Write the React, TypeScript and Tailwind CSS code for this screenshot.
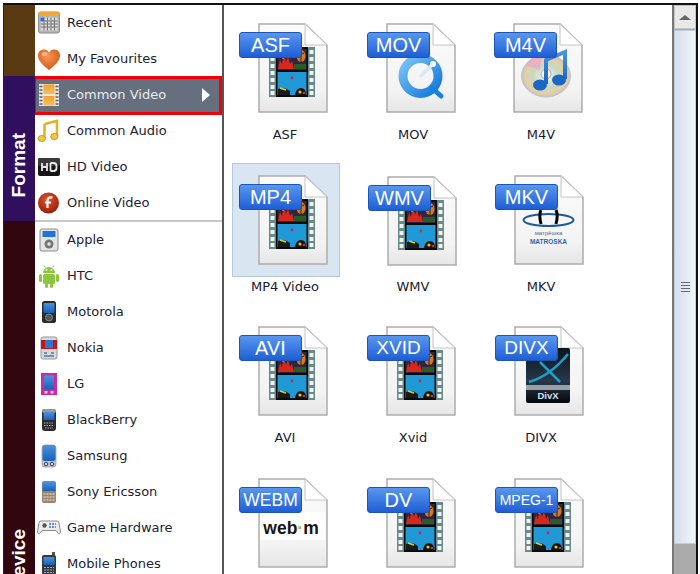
import React from "react";

const Defs = () => (
  <svg width="0" height="0" className="absolute">
    <defs>
      <linearGradient id="sheet" x1="0" y1="0" x2="0" y2="1">
        <stop offset="0" stopColor="#fbfbfb" />
        <stop offset="0.75" stopColor="#f3f3f3" />
        <stop offset="1" stopColor="#e6e6e6" />
      </linearGradient>
      <linearGradient id="chip" x1="0" y1="0" x2="0" y2="1">
        <stop offset="0" stopColor="#f0a030" />
        <stop offset="1" stopColor="#f4c060" />
      </linearGradient>
      <radialGradient id="heart" cx="0.45" cy="0.35" r="0.7">
        <stop offset="0" stopColor="#f49a58" />
        <stop offset="1" stopColor="#d2520f" />
      </radialGradient>
      <radialGradient id="flash" cx="0.45" cy="0.35" r="0.7">
        <stop offset="0" stopColor="#e8532c" />
        <stop offset="1" stopColor="#8f1c08" />
      </radialGradient>
      <linearGradient id="blue" x1="0" y1="0" x2="0" y2="1">
        <stop offset="0" stopColor="#4a93e0" />
        <stop offset="1" stopColor="#1960b8" />
      </linearGradient>
      <linearGradient id="qt" x1="0" y1="0" x2="1" y2="1">
        <stop offset="0" stopColor="#7cc4f6" />
        <stop offset="1" stopColor="#1276dc" />
      </linearGradient>
      <radialGradient id="cd" cx="0.5" cy="0.5" r="0.55">
        <stop offset="0" stopColor="#f0f0f0" />
        <stop offset="0.5" stopColor="#c8d8c0" />
        <stop offset="0.75" stopColor="#e6cfa8" />
        <stop offset="1" stopColor="#b6bcc6" />
      </radialGradient>
      <linearGradient id="dvx" x1="0" y1="0" x2="0" y2="1">
        <stop offset="0" stopColor="#0c141c" />
        <stop offset="0.6" stopColor="#28384a" />
        <stop offset="1" stopColor="#06080a" />
      </linearGradient>
    </defs>
  </svg>
);

/* ---------- sidebar icons (24x24) ---------- */
const Phone = ({ body, screen = "url(#blue)", children }: { body: string; screen?: string; children?: React.ReactNode }) => (
  <svg viewBox="0 0 24 24" className="w-6 h-6">
    <rect x="5" y="1" width="14" height="22" rx="2.5" fill={body} />
    <rect x="6.5" y="3" width="11" height="10" rx="1" fill={screen} />
    {children}
  </svg>
);

const icons: Record<string, React.ReactNode> = {
  recent: (
    <svg viewBox="0 0 24 24" className="w-6 h-6">
      <rect x="1.5" y="1" width="21" height="21" rx="2" fill="#b4b4b4" stroke="#8c8c8c" />
      <rect x="1.5" y="1" width="21" height="4" rx="1" fill="#f0a838" />
      <rect x="3.5" y="6.5" width="17" height="13" fill="#d8d8d8" />
      <path d="M3.5 10h17M3.5 13h17M3.5 16h17M7 6.5v13M10.5 6.5v13M14 6.5v13M17.5 6.5v13" stroke="#777" strokeWidth="1" />
      <rect x="3.5" y="6.5" width="3.5" height="3.5" fill="#1e6fe0" />
    </svg>
  ),
  fav: (
    <svg viewBox="0 0 24 24" className="w-6 h-6">
      <path d="M12 23C6 18 1 14 1 8.5 1 4.500 4 2.500 7 2.500c2.500 0 4 1.200 5 3 1-1.800 2.500-3 5-3 3 0 6 2 6 6C23 14 18 18 12 23z" fill="url(#heart)" />
      <ellipse cx="7.5" cy="7" rx="3" ry="2" fill="#fbc79c" opacity="0.7" />
    </svg>
  ),
  video: (
    <svg viewBox="0 0 24 24" className="w-6 h-6">
      <rect x="2" y="1" width="20" height="22" fill="#e8e8e0" />
      <rect x="6.5" y="1.5" width="11" height="9.5" fill="url(#chip)" />
      <rect x="6.5" y="13" width="11" height="9.5" fill="url(#chip)" />
      <path d="M2.500 3.500h3M2.500 7h3M2.500 10.500h3M2.500 14h3M2.500 17.500h3M2.500 21h3M18.500 3.500h3M18.500 7h3M18.500 10.500h3M18.500 14h3M18.500 17.500h3M18.500 21h3" stroke="#55606c" strokeWidth="1.5" />
    </svg>
  ),
  audio: (
    <svg viewBox="0 0 24 24" className="w-6 h-6">
      <path d="M7.5 5 20 2v15" fill="none" stroke="#e2b42c" strokeWidth="2.6" />
      <path d="M7.5 5v14.500" fill="none" stroke="#e2b42c" strokeWidth="2.6" />
      <ellipse cx="4.8" cy="19.5" rx="3.6" ry="3" fill="#f2c93e" stroke="#c4961c" />
      <ellipse cx="17.3" cy="17.5" rx="3.6" ry="3" fill="#f2c93e" stroke="#c4961c" />
    </svg>
  ),
  hd: (
    <svg viewBox="0 0 24 24" className="w-6 h-6">
      <rect x="1" y="3" width="22" height="18" rx="2" fill="#151515" />
      <rect x="1" y="3" width="22" height="8" rx="2" fill="#3a3a3a" />
      <path d="M5 8v8M10 8v8M5 12h5M13.500 8v8M13.500 8h3a3 3 0 0 1 3 3v2a3 3 0 0 1-3 3h-3" fill="none" stroke="#e8e8e8" strokeWidth="1.8" />
    </svg>
  ),
  online: (
    <svg viewBox="0 0 24 24" className="w-6 h-6">
      <circle cx="11.5" cy="12" r="10.5" fill="url(#flash)" />
      <path d="M15.500 6.500c-3.500-.6-5 .6-5 3.500v7M8 11.500h6" fill="none" stroke="#fff" strokeWidth="2.2" />
    </svg>
  ),
  apple: (
    <svg viewBox="0 0 24 24" className="w-6 h-6">
      <rect x="3" y="1" width="18" height="22" rx="2" fill="#e4e4e4" stroke="#8a8a8a" />
      <rect x="5.5" y="3" width="13" height="6" fill="#1e74d8" />
      <circle cx="12" cy="16" r="4.5" fill="#777" />
      <circle cx="12" cy="16" r="1.8" fill="#e4e4e4" />
    </svg>
  ),
  htc: (
    <svg viewBox="0 0 24 24" className="w-6 h-6">
      <path d="M6 9a6 6 0 0 1 12 0z" fill="#8cc63f" />
      <rect x="6" y="10" width="12" height="10" rx="1.5" fill="#8cc63f" />
      <rect x="2" y="10" width="3" height="8" rx="1.5" fill="#8cc63f" />
      <rect x="19" y="10" width="3" height="8" rx="1.5" fill="#8cc63f" />
      <rect x="8" y="19" width="3" height="5" rx="1.5" fill="#8cc63f" />
      <rect x="13" y="19" width="3" height="5" rx="1.5" fill="#8cc63f" />
      <path d="M8.500 3.500 7 1.500M15.500 3.500 17 1.500" stroke="#8cc63f" />
      <circle cx="9.5" cy="6" r="1" fill="#fff" />
      <circle cx="14.5" cy="6" r="1" fill="#fff" />
    </svg>
  ),
  motorola: (
    <Phone body="#2a2a2a">
      <circle cx="12" cy="17.5" r="3.5" fill="#555" stroke="#888" />
    </Phone>
  ),
  nokia: (
    <svg viewBox="0 0 24 24" className="w-6 h-6">
      <rect x="4" y="1" width="16" height="22" rx="2" fill="#d8d8d8" stroke="#999" />
      <rect x="4" y="4" width="16" height="9" fill="#c01818" />
      <rect x="8" y="4" width="8" height="8" fill="#2a78d0" />
      <path d="M7 17h3M14 17h3M7 20h10" stroke="#4a7ab0" strokeWidth="1.6" />
    </svg>
  ),
  lg: (
    <svg viewBox="0 0 24 24" className="w-6 h-6">
      <rect x="4" y="1" width="16" height="22" fill="#c82c9e" />
      <rect x="7" y="3.5" width="10" height="14" rx="1" fill="url(#blue)" />
      <rect x="7.5" y="19" width="3" height="2.5" fill="#f6d0ea" />
      <rect x="13.5" y="19" width="3" height="2.5" fill="#f6d0ea" />
    </svg>
  ),
  blackberry: (
    <svg viewBox="0 0 24 24" className="w-6 h-6">
      <rect x="5" y="1" width="14" height="22" rx="3" fill="#2c2c2c" />
      <rect x="5" y="1" width="14" height="4" rx="2" fill="#999" />
      <rect x="6.5" y="4" width="11" height="8" fill="url(#blue)" />
      <path d="M7 15h10M7 17.500h10M8 20h8" stroke="#aaa" strokeWidth="1.2" strokeDasharray="1.5 1" />
    </svg>
  ),
  samsung: (
    <svg viewBox="0 0 24 24" className="w-6 h-6">
      <rect x="5" y="1" width="14" height="22" rx="3" fill="#c0c8d4" stroke="#667" strokeWidth="0.5" />
      <rect x="5.5" y="1" width="13" height="16" rx="2.5" fill="url(#blue)" />
      <circle cx="9" cy="20" r="1.8" fill="none" stroke="#445" />
      <circle cx="15" cy="20" r="1.8" fill="none" stroke="#445" />
    </svg>
  ),
  sony: (
    <svg viewBox="0 0 24 24" className="w-6 h-6">
      <rect x="5" y="1" width="14" height="22" rx="2" fill="#9c8470" />
      <rect x="5.5" y="2" width="13" height="9" fill="url(#blue)" />
      <path d="M6.500 14h11M6.500 17h11M6.500 20h11" stroke="#d8c8b8" strokeWidth="1.4" strokeDasharray="2 1" />
    </svg>
  ),
  game: (
    <svg viewBox="0 0 24 24" className="w-6 h-6">
      <path d="M2 7c0-1.500 1-2 2-2h16c1 0 2 .5 2 2l1.500 9c.2 1.800-2 2-3 .5l-1.500-2H5l-1.500 2c-1 1.500-3.200 1.300-3-.5z" fill="#ececec" stroke="#8a8a8a" />
      <circle cx="7.5" cy="9.5" r="2.2" fill="#555" />
      <path d="M12 8h7M12 11h7" stroke="#3a74c0" strokeWidth="1.5" strokeDasharray="2 1" />
    </svg>
  ),
  mobile: (
    <svg viewBox="0 0 24 24" className="w-6 h-6">
      <rect x="15" y="0" width="3" height="4" fill="#555" />
      <rect x="5" y="3" width="14" height="20" rx="2" fill="#33383e" />
      <rect x="6.5" y="5" width="11" height="8" fill="url(#blue)" />
      <path d="M7 15.500h10M7 18h10M7 20.500h10" stroke="#aab" strokeWidth="1.2" strokeDasharray="2 1" />
    </svg>
  ),
};

const topRows = [
  { k: "recent", t: "Recent" },
  { k: "fav", t: "My Favourites" },
  { k: "video", t: "Common Video", sel: true },
  { k: "audio", t: "Common Audio" },
  { k: "hd", t: "HD Video" },
  { k: "online", t: "Online Video" },
];
const deviceRows = [
  { k: "apple", t: "Apple" },
  { k: "htc", t: "HTC" },
  { k: "motorola", t: "Motorola" },
  { k: "nokia", t: "Nokia" },
  { k: "lg", t: "LG" },
  { k: "blackberry", t: "BlackBerry" },
  { k: "samsung", t: "Samsung" },
  { k: "sony", t: "Sony Ericsson" },
  { k: "game", t: "Game Hardware" },
  { k: "mobile", t: "Mobile Phones" },
];

const Row = ({ k, t, sel, top }: { k: string; t: string; sel?: boolean; top?: boolean }) =>
  sel ? (
    <div className="relative z-10 -ml-[2px] h-[39px] -my-[1.5px] flex items-center bg-[#666f7d] border-[3px] border-[#ee0009] shrink-0 pb-[1px]">
      <div className="w-[25px] flex justify-center shrink-0">{icons[k]}</div>
      <span className="ml-[6px] text-[#e8ebee]">{t}</span>
      <span className="ml-auto mr-[9px] w-0 h-0 border-y-[7px] border-y-transparent border-l-[8px] border-l-white" />
    </div>
  ) : (
    <div className={`h-[36px] flex items-center shrink-0 ${top ? "" : "pt-[1px]"}`}>
      <div className="w-[27px] flex justify-center shrink-0">{icons[k]}</div>
      <span className="ml-[5px] text-[#1a2334]">{t}</span>
    </div>
  );

/* ---------- file thumbnails ---------- */
const Film = () => (
  <g>
    <rect x="11" y="24" width="46" height="50" fill="#6a8a88" />
    {[27, 34, 41, 48, 55, 62, 68].map((y) => (
      <g key={y}>
        <rect x="12.5" y={y} width="4" height="4" fill="#eef2f0" />
        <rect x="51.5" y={y} width="4" height="4" fill="#eef2f0" />
      </g>
    ))}
    <rect x="18" y="24" width="32" height="50" fill="#0a0a0a" />
    <rect x="19.5" y="26" width="29" height="21" fill="#2e2640" />
    <path d="M20 46l2-9 2 4 2-11 2 9 2-6 2 8 2-3 2 8z" fill="#d8281c" />
    <path d="M24 30l1 6 2-7 1 5" stroke="#7a88c8" fill="none" />
    <ellipse cx="43" cy="33" rx="4.5" ry="6" fill="#d87a1c" />
    <path d="M43 27v12M40 30q3 3 6 0" stroke="#222" fill="none" />
    <rect x="36" y="41" width="12" height="5" fill="#2a5a28" />
    <rect x="19.5" y="49" width="29" height="23" fill="#1f9ad6" />
    <circle cx="34" cy="55" r="1.4" fill="#d82044" />
    <path d="M20 66q6-3 12 2v4H20z" fill="#1a1a1a" />
    <path d="M22 65l6 2" stroke="#e8d020" strokeWidth="1.5" />
    <path d="M37 72q1-7 6-7t5 7z" fill="#1a1010" />
    <circle cx="42" cy="69" r="1.6" fill="#e8c020" />
    <circle cx="46" cy="70" r="1.3" fill="#d83018" />
  </g>
);

const QuickTime = () => (
  <g>
    <circle cx="34.5" cy="53" r="17.5" fill="none" stroke="url(#qt)" strokeWidth="9" />
    <path d="M46 65l9 8" stroke="#1a80e0" strokeWidth="5" strokeLinecap="round" />
    <path d="M35 53l11-11" stroke="#d8e8f6" strokeWidth="3.5" strokeLinecap="round" />
    <circle cx="47" cy="41" r="3" fill="#fff" />
  </g>
);

const Itunes = () => (
  <g>
    <ellipse cx="33" cy="53" rx="24.5" ry="21" fill="url(#cd)" stroke="#c0c4cc" />
    <path d="M13 43q6-12 16-11l-2 15z" fill="#e8a8c8" opacity="0.7" />
    <path d="M43 65q8-4 10-12l-12-1z" fill="#a8dcb0" opacity="0.7" />
    <circle cx="33" cy="51" r="5" fill="#f4f4f4" stroke="#aaa" />
    <path d="M33 61V37l19-8v27" fill="none" stroke="url(#blue)" strokeWidth="4" />
    <ellipse cx="27" cy="62" rx="7" ry="5.5" fill="#1d66c4" />
    <ellipse cx="46" cy="57" rx="7" ry="5.5" fill="#1d66c4" />
  </g>
);

const Matroska = () => (
  <g>
    <ellipse cx="34.5" cy="45" rx="25" ry="6" fill="none" stroke="#1c5a98" strokeWidth="2" />
    <path d="M27 35c-1.500 3-1.500 8 0 14M42 35c1.500 3 1.500 8 0 14" fill="none" stroke="#000" strokeWidth="3" />
    <text x="34.5" y="60" textAnchor="middle" fontSize="6" fill="#667" fontFamily="Liberation Sans, sans-serif">матрёшка</text>
    <text x="34.5" y="69" textAnchor="middle" fontSize="6.5" fontWeight="700" fill="#2a6aa8" fontFamily="Liberation Sans, sans-serif">MATROSKA</text>
  </g>
);

const Divx = () => (
  <g>
    <rect x="12" y="22" width="44" height="55" rx="2" fill="url(#dvx)" />
    <path d="M15 56Q36 50 54 28" stroke="#1ea0c8" strokeWidth="2.5" fill="none" />
    <path d="M26 36Q36 46 46 56" stroke="#1ea0c8" strokeWidth="2.5" fill="none" />
    <rect x="12" y="59" width="44" height="5" fill="#98a0a8" />
    <text x="34" y="73" textAnchor="middle" fontSize="9.5" fontWeight="700" fill="#cfe4f2" fontFamily="Liberation Sans, sans-serif">DivX</text>
  </g>
);

const Webm = () => (
  <g>
    <rect x="2" y="34" width="65" height="28" fill="#fff" />
    <text x="33" y="56" textAnchor="middle" fontSize="17.5" fontWeight="700" fill="#151515" fontFamily="Liberation Sans, sans-serif">
      web<tspan fill="#8cc63f">·</tspan>m
    </text>
  </g>
);

const arts: Record<string, React.ReactNode> = {
  film: <Film />,
  qt: <QuickTime />,
  itunes: <Itunes />,
  mkv: <Matroska />,
  divx: <Divx />,
  webm: <Webm />,
};

type F = { tag: string; label: string; art: string; size: string; sel?: boolean; off?: string };

const files: F[] = [
  { tag: "ASF", label: "ASF", art: "film", size: "text-[20px]" },
  { tag: "MOV", label: "MOV", art: "qt", size: "text-[20px]" },
  { tag: "M4V", label: "M4V", art: "itunes", size: "text-[20px]", off: "-ml-[1px]" },
  { tag: "MP4", label: "MP4 Video", art: "film", size: "text-[20px]", sel: true },
  { tag: "WMV", label: "WMV", art: "film", size: "text-[20px]", off: "ml-[1px] mt-[1px]" },
  { tag: "MKV", label: "MKV", art: "mkv", size: "text-[20px]" },
  { tag: "AVI", label: "AVI", art: "film", size: "text-[20px]" },
  { tag: "XVID", label: "Xvid", art: "film", size: "text-[19px]" },
  { tag: "DIVX", label: "DIVX", art: "divx", size: "text-[19px]" },
  { tag: "WEBM", label: "", art: "webm", size: "text-[17.5px]" },
  { tag: "DV", label: "", art: "film", size: "text-[20px]" },
  { tag: "MPEG-1", label: "", art: "film", size: "text-[14px]" },
];

const FileCell = ({ f }: { f: F }) => (
  <div className="flex flex-col items-center">
    <div className={`w-[108px] h-[114px] pl-[25px] pt-[11px] border ${f.sel ? "bg-[#d9e5f1] border-[#b4c8de]" : "border-transparent"}`}>
      <div className={`relative w-[70px] h-[90px] ${f.off ?? ""}`}>
        <svg viewBox="0 0 70 90" className="w-[70px] h-[90px]">
          <path d="M1 1H47L69 22V89H1z" fill="url(#sheet)" stroke="#adadad" strokeWidth="1.5" />
          <path d="M47 1V22H69z" fill="#fff" stroke="#c4c4c4" strokeWidth="1" />
          {arts[f.art]}
        </svg>
        <div
          className={`absolute left-[-19px] top-[9px] w-[63px] h-[26px] flex items-center justify-center rounded-[3px] border border-[#1c56b4] bg-gradient-to-b from-[#5896ee] to-[#1f5ed4] text-white font-['Liberation_Sans',sans-serif] ${f.size}`}
        >
          {f.tag}
        </div>
      </div>
    </div>
    <div className="h-[20px] leading-[20px] pr-[2px] text-[#1a2030] text-[13px]">{f.label}</div>
  </div>
);

export default function App() {
  return (
    <div className="w-[700px] h-[574px] overflow-hidden bg-white pt-[3px] pl-[3px] font-['DejaVu_Sans',sans-serif] text-[13px]">
      <Defs />
      <div className="flex w-[695px] h-[571px] border-t-2 border-t-[#111] border-l border-l-[#222] border-r-2 border-r-[#111]">
        {/* colour strip */}
        <div className="w-[31px] shrink-0 flex flex-col overflow-hidden font-['Liberation_Sans',sans-serif] font-bold text-[19px] text-white">
          <div className="h-[71px] bg-[#5a3a12] shrink-0" />
          <div className="h-[145px] bg-[#30105e] shrink-0 flex items-center justify-center pt-[34px]">
            <span className="[writing-mode:vertical-rl] rotate-180">Format</span>
          </div>
          <div className="flex-1 bg-[#32060f] flex flex-col items-center justify-end">
            <span className="[writing-mode:vertical-rl] rotate-180 -mb-[16px]">Device</span>
          </div>
        </div>

        {/* category list */}
        <div className="w-[189px] shrink-0 flex flex-col border-r-2 border-r-[#555] overflow-hidden">
          {topRows.map((r) => (
            <Row key={r.k} {...r} top />
          ))}
          <div className="h-[2px] bg-[#c8c8c8] shrink-0 -mt-[1px]" />
          <div className="-mt-[1px] flex flex-col">
            {deviceRows.map((r) => (
              <Row key={r.k} {...r} />
            ))}
          </div>
        </div>

        {/* file grid */}
        <div className="flex-1 overflow-hidden pl-[8px] pt-[6px]">
          <div className="grid grid-cols-[108px_108px_108px] gap-x-[20px] grid-rows-[152px_151px_152px_152px]">
            {files.map((f) => (
              <FileCell key={f.tag} f={f} />
            ))}
          </div>
        </div>

        {/* scrollbar */}
        <div className="w-[24px] shrink-0 flex flex-col bg-[#ababab] border-l-2 border-l-[#777]">
          <div className="h-[24px] shrink-0 flex items-center justify-center bg-[#e8e8e8] border border-[#c4c4c4]">
            <span className="w-0 h-0 border-x-[6px] border-x-transparent border-b-[5px] border-b-[#666]" />
          </div>
          <div className="h-[514px] shrink-0 mt-[1px] bg-gradient-to-r from-[#d6dfec] via-[#e2e9f3] to-[#f2f5fa] border border-[#c2cbd8] flex items-center justify-center">
            <div className="flex flex-col gap-[2px]">
              <span className="w-[9px] h-[1px] bg-[#667]" />
              <span className="w-[9px] h-[1px] bg-[#667]" />
              <span className="w-[9px] h-[1px] bg-[#667]" />
              <span className="w-[9px] h-[1px] bg-[#667]" />
            </div>
          </div>
        </div>
      </div>
    </div>
  );
}
